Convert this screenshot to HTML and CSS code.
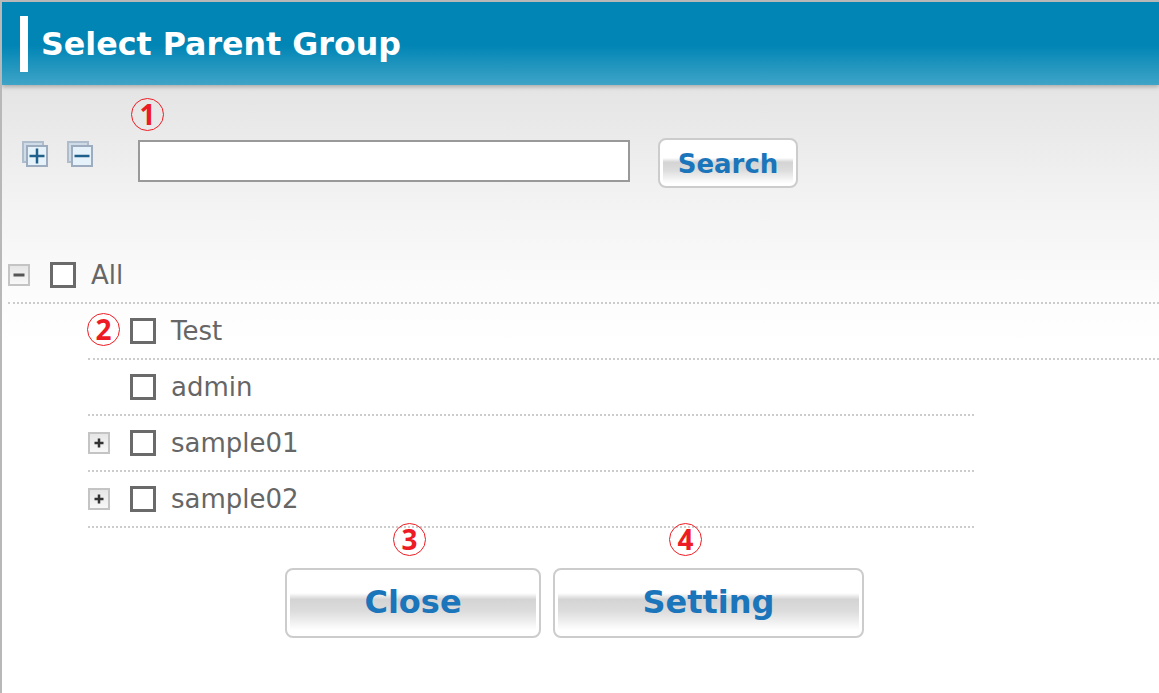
FILE: index.html
```html
<!DOCTYPE html>
<html lang="en">
<head>
    <meta charset="UTF-8">
    <meta name="viewport" content="width=device-width, initial-scale=1.0">
    <title>Select Parent Group</title>
    <link rel="stylesheet" href="styles.css">
</head>
<body>
    <div class="page">
        <div class="header">
            <h1>Select Parent Group</h1>
        </div>

        <div class="content">
            <div class="toolbar">
                <div class="tree-tools">
                    <svg class="tool-icon" viewBox="0 0 26 26">
                        <rect x="1" y="1" width="20" height="20" fill="#cfdce8" stroke="#aebccb" stroke-width="2"/>
                        <rect x="5" y="5" width="20" height="20" fill="#e6f2f9" stroke="#9dadbf" stroke-width="2"/>
                        <path d="M15 7.500v15M7.500 15h15" stroke="#1f5f8c" stroke-width="2.500" fill="none"/>
                    </svg>
                    <svg class="tool-icon" viewBox="0 0 26 26">
                        <rect x="1" y="1" width="20" height="20" fill="#cfdce8" stroke="#aebccb" stroke-width="2"/>
                        <rect x="5" y="5" width="20" height="20" fill="#e6f2f9" stroke="#9dadbf" stroke-width="2"/>
                        <path d="M7.500 15h15" stroke="#1f5f8c" stroke-width="2.500" fill="none"/>
                    </svg>
                </div>
                <input class="search-input" type="text">
                <button class="btn btn-search" type="button">Search</button>
            </div>

            <div class="tree">
                <div class="row row-root">
                    <span class="toggle">
                        <svg viewBox="0 0 18 18"><path d="M3.500 9h11" stroke="#555" stroke-width="3" fill="none"/></svg>
                    </span>
                    <input class="check" type="checkbox">
                    <span class="label">All</span>
                </div>
                <div class="row row-wide">
                    <span class="toggle-empty"></span>
                    <input class="check" type="checkbox">
                    <span class="label">Test</span>
                </div>
                <div class="row row-child">
                    <span class="toggle-empty"></span>
                    <input class="check" type="checkbox">
                    <span class="label">admin</span>
                </div>
                <div class="row row-child">
                    <span class="toggle">
                        <svg viewBox="0 0 18 18"><path d="M9 4.500v9M4.500 9h9" stroke="#333" stroke-width="2.500" fill="none"/></svg>
                    </span>
                    <input class="check" type="checkbox">
                    <span class="label">sample01</span>
                </div>
                <div class="row row-child">
                    <span class="toggle">
                        <svg viewBox="0 0 18 18"><path d="M9 4.500v9M4.500 9h9" stroke="#333" stroke-width="2.500" fill="none"/></svg>
                    </span>
                    <input class="check" type="checkbox">
                    <span class="label">sample02</span>
                </div>
            </div>

            <div class="actions">
                <button class="btn btn-close" type="button">Close</button>
                <button class="btn btn-setting" type="button">Setting</button>
            </div>
        </div>

        <!-- red callout numbers on top of the screen -->
        <span class="callout callout-1">1</span>
        <span class="callout callout-2">2</span>
        <span class="callout callout-3">3</span>
        <span class="callout callout-4">4</span>
    </div>
</body>
</html>
```

FILE: styles.css
```css
* {
    box-sizing: border-box;
}

html, body {
    margin: 0;
    padding: 0;
    height: 100%;
    overflow: hidden;
}

body {
    font-family: "DejaVu Sans", Verdana, sans-serif;
    background-color: #fff;
    color: #666;
}

.page {
    position: relative;
    height: 693px;
    border-top: 2px solid #b8b8b8;
    border-left: 2px solid #b8b8b8;
    overflow: hidden;
}

.header {
    position: relative;
    display: flex;
    align-items: center;
    height: 83px;
    padding-left: 18px;
    background: linear-gradient(to bottom, #0085b5 0%, #0085b5 52%, #3fa4c7 100%);
    box-shadow: 0 2px 4px rgba(0, 0, 0, 0.25);
}

.header h1 {
    margin: 0;
    padding-left: 13px;
    border-left: 8px solid #fff;
    height: 56px;
    line-height: 57px;
    font-size: 31.7px;
    font-weight: bold;
    color: #fff;
}

.content {
    background: linear-gradient(to bottom, #e4e4e4 0, #f2f2f2 110px, #fcfcfc 210px, #fff 260px);
    height: 608px;
}

.toolbar {
    display: flex;
    align-items: flex-start;
    height: 163px;
    padding: 53px 0 0 20px;
}

.tree-tools {
    display: flex;
    gap: 19px;
    width: 116px;
    padding-top: 3px;
}

.tool-icon {
    width: 26px;
    height: 26px;
}

.search-input {
    width: 492px;
    height: 42px;
    margin: 2px 28px 0 0;
    border: 2px solid #999;
    background-color: #fff;
    outline: none;
}

.btn {
    border: 2px solid #ccc;
    border-radius: 8px;
    padding: 0 3px;
    font-family: inherit;
    font-weight: bold;
    color: #1b75bb;
    background: linear-gradient(to bottom, #fff 0%, #fff 36%, #d4d4d4 46%, #dcdcdc 64%, #fff 94%) content-box, #fff;
}

.btn-search {
    width: 140px;
    height: 50px;
    padding-top: 2px;
    font-size: 26px;
}

.tree {
    padding-left: 6px;
}

.row {
    display: flex;
    align-items: center;
    height: 56px;
    border-bottom: 2px dotted #ccc;
}

.row-wide {
    margin-left: 80px;
}

.row-child {
    margin-left: 80px;
    width: 886px;
}

.toggle,
.toggle-empty {
    width: 22px;
    height: 22px;
    margin-right: 20px;
}

.toggle {
    display: flex;
    border: 2px solid #c4c4c4;
    background: linear-gradient(to bottom, #e6e6e6, #f8f8f8);
}

.check {
    appearance: none;
    width: 26px;
    height: 26px;
    margin: 0 15px 0 0;
    border: 3px solid #6a6a6a;
    background-color: #fff;
}

.label {
    font-size: 26px;
}

.actions {
    display: flex;
    gap: 12px;
    margin-top: 40px;
    padding-left: 283px;
}

.btn-close,
.btn-setting {
    height: 70px;
    padding-bottom: 2px;
    font-size: 32px;
}

.btn-close {
    width: 256px;
}

.btn-setting {
    width: 311px;
}

.callout {
    position: absolute;
    width: 33px;
    height: 33px;
    border: 1px solid #ed1c24;
    border-radius: 50%;
    text-align: center;
    line-height: 31px;
    font-family: "Noto Sans", sans-serif;
    font-size: 28px;
    font-weight: bold;
    color: #ed1c24;
}

.callout-1 {
    left: 129px;
    top: 96px;
}

.callout-2 {
    left: 85px;
    top: 311px;
}

.callout-3 {
    left: 391px;
    top: 521px;
}

.callout-4 {
    left: 667px;
    top: 521px;
}
```
